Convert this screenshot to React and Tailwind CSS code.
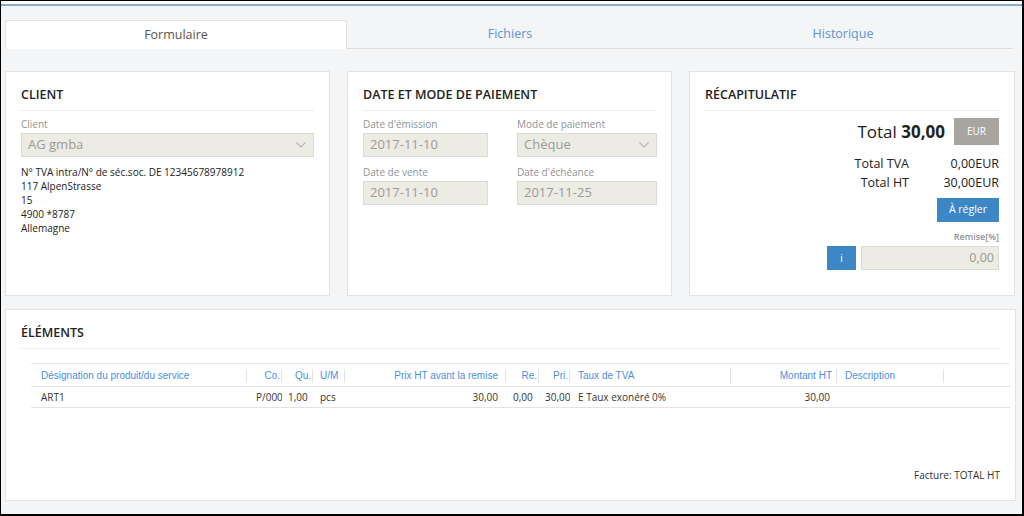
const cols = [
  { head: "Désignation du produit/du service", w: "w-[216px]", align: "text-left pl-[10px]", cell: "ART1" },
  { head: "Co.", w: "w-[35px]", align: "text-right pr-[2px]", cell: "P/0001", cellAlign: "text-left pl-[9px]" },
  { head: "Qu.", w: "w-[31px]", align: "text-right pr-[2px]", cell: "1,00", cellAlign: "text-left pl-[6px]" },
  { head: "U/M", w: "w-[32px]", align: "text-left pl-[7px]", cell: "pcs" },
  { head: "Prix HT avant la remise", w: "w-[161px]", align: "text-right pr-[8px]", cell: "30,00" },
  { head: "Re.", w: "w-[33px]", align: "text-right pr-[2px]", cell: "0,00", cellAlign: "text-left pl-[7px]" },
  { head: "Pri.", w: "w-[31px]", align: "text-right pr-[2px]", cell: "30,00", cellAlign: "text-left pl-[6px]" },
  { head: "Taux de TVA", w: "w-[161px]", align: "text-left pl-[8px]", cell: "E Taux exonéré 0%" },
  { head: "Montant HT", w: "w-[106px]", align: "text-right pr-[5px]", cell: "30,00", cellAlign: "text-right pr-[7px]" },
  { head: "Description", w: "w-[107px]", align: "text-left pl-[8px]", cell: "" },
  { head: "", w: "w-[67px]", align: "", cell: "", noSep: true },
];

const Chevron = () => (
  <svg width="12" height="8" viewBox="0 0 12 8" className="shrink-0">
    <path d="M1.5 1.5 L6 6 L10.5 1.5" fill="none" stroke="#b9b9b2" strokeWidth="1.2" />
  </svg>
);

const Label = ({ children }) => (
  <div className="text-[10px] leading-[14px] text-[#8d949c] mb-[2px]">{children}</div>
);

const Field = ({ children, select }) => (
  <div className="h-[24px] bg-[#ecebe4] border border-[#dddcd4] flex items-center justify-between px-[6px] text-[13px] text-[#9b9b96]">
    <span>{children}</span>
    {select && <Chevron />}
  </div>
);

const CardTitle = ({ children }) => (
  <div className="text-[12.5px] font-semibold text-[#222] pb-[6px] border-b border-[#ececec] leading-[18px]">
    {children}
  </div>
);

export default function App() {
  return (
    <div
      className="h-[516px] w-[1024px] overflow-hidden bg-[#f3f5f7] border-t border-l border-r-2 border-b-2 border-black flex flex-col"
      style={{ fontFamily: '"Open Sans", "Noto Sans", sans-serif' }}
    >
      <div className="h-[3px] bg-white" />
      <div className="h-[2px] bg-[#86acd4]" />

      {/* Tabs */}
      <div className="mt-[14px] ml-[4px] flex h-[29px]">
        <div className="w-[342px] bg-white border border-b-0 border-[#e6e3df] rounded-t-[3px] flex items-center justify-center text-[12.5px] text-[#555]">
          Formulaire
        </div>
        <div className="w-[326px] border-b border-[#e2ddd8] flex items-center justify-center text-[12.5px] text-[#5d94cc]">
          Fichiers
        </div>
        <div className="w-[340px] border-b border-[#e2ddd8] flex items-center justify-center text-[12.5px] text-[#5d94cc]">
          Historique
        </div>
      </div>

      {/* Cards row */}
      <div className="mt-[22px] ml-[4px] grid grid-cols-[325px_325px_326px] gap-x-[17px] h-[225px]">
        {/* Client */}
        <div className="bg-white border border-[#e3e3e3] pl-[15px] pr-[15px] pt-[14px]">
          <CardTitle>CLIENT</CardTitle>
          <div className="mt-[6px]">
            <Label>Client</Label>
            <Field select>AG gmba</Field>
          </div>
          <div className="mt-[8px] text-[10px] leading-[14px] text-[#222]">
            <div>N° TVA intra/N° de séc.soc. DE 12345678978912</div>
            <div>117 AlpenStrasse</div>
            <div>15</div>
            <div>4900 *8787</div>
            <div>Allemagne</div>
          </div>
        </div>

        {/* Date et mode */}
        <div className="bg-white border border-[#e3e3e3] pl-[15px] pr-[15px] pt-[14px]">
          <CardTitle>DATE ET MODE DE PAIEMENT</CardTitle>
          <div className="mt-[6px] grid grid-cols-[125px_140px] gap-x-[29px] gap-y-[8px]">
            <div>
              <Label>Date d'émission</Label>
              <Field>2017-11-10</Field>
            </div>
            <div>
              <Label>Mode de paiement</Label>
              <Field select>Chèque</Field>
            </div>
            <div>
              <Label>Date de vente</Label>
              <Field>2017-11-10</Field>
            </div>
            <div>
              <Label>Date d'échéance</Label>
              <Field>2017-11-25</Field>
            </div>
          </div>
        </div>

        {/* Récapitulatif */}
        <div className="bg-white border border-[#e3e3e3] pl-[15px] pr-[15px] pt-[14px]">
          <CardTitle>RÉCAPITULATIF</CardTitle>
          <div className="mt-[7px] flex justify-end items-center gap-[9px]">
            <div className="text-[17px] text-[#222]">
              Total <span className="font-bold">30,00</span>
            </div>
            <div className="w-[45px] h-[27px] bg-[#a8a49f] text-white text-[10px] flex items-center justify-center">
              EUR
            </div>
          </div>
          <div className="mt-[9px] flex justify-end text-[12.5px] text-[#222] leading-[19px]">
            <div className="text-right">
              <div>Total TVA</div>
              <div>Total HT</div>
            </div>
            <div className="w-[90px] text-right">
              <div>0,00EUR</div>
              <div>30,00EUR</div>
            </div>
          </div>
          <div className="mt-[6px] flex justify-end">
            <div className="w-[62px] h-[24px] bg-[#3d87c7] text-white text-[10.5px] flex items-center justify-center">
              À régler
            </div>
          </div>
          <div className="mt-[9px] text-right text-[9px] font-semibold text-[#8d949c] leading-[12px]">Remise[%]</div>
          <div className="mt-[3px] flex justify-end gap-[5px]">
            <div className="w-[29px] h-[24px] bg-[#3d87c7] text-white text-[10px] flex items-center justify-center">
              i
            </div>
            <div className="w-[138px] h-[24px] bg-[#ecebe4] border border-[#dddcd4] flex items-center justify-end pr-[4px] text-[12.5px] text-[#9b9b96]">
              0,00
            </div>
          </div>
        </div>
      </div>

      {/* Éléments */}
      <div className="mt-[13px] ml-[4px] w-[1011px] h-[192px] bg-white border border-[#e3e3e3] pl-[15px] pr-[15px] pt-[14px] flex flex-col">
        <CardTitle>ÉLÉMENTS</CardTitle>
        <div className="mt-[14px] ml-[10px] mr-[-10px] border-t border-[#e8e8e8]">
          <div className="flex h-[23px] items-center border-b border-[#e3e3e3]" style={{ fontFamily: '"Liberation Sans", Arial, sans-serif' }}>
            {cols.map((c, i) => (
              <div key={i} className={`${c.w} shrink-0 h-full flex items-center relative`}>
                <div className={`w-full truncate text-[10px] text-[#4a90e2] ${c.align}`}>{c.head}</div>
                {!c.noSep && <div className="absolute right-0 top-[5px] h-[14px] border-r border-[#e2e2e2]" />}
              </div>
            ))}
          </div>
          <div className="flex h-[21px] items-center border-b border-[#e3e3e3]">
            {cols.map((c, i) => (
              <div key={i} className={`${c.w} shrink-0 overflow-hidden whitespace-nowrap text-[10px] text-[#333] ${c.cellAlign || c.align}`}>
                {c.cell}
              </div>
            ))}
          </div>
        </div>
        <div className="flex-1" />
        <div className="text-right text-[10px] text-[#333] mb-[17px]">Facture: TOTAL HT</div>
      </div>
    </div>
  );
}
